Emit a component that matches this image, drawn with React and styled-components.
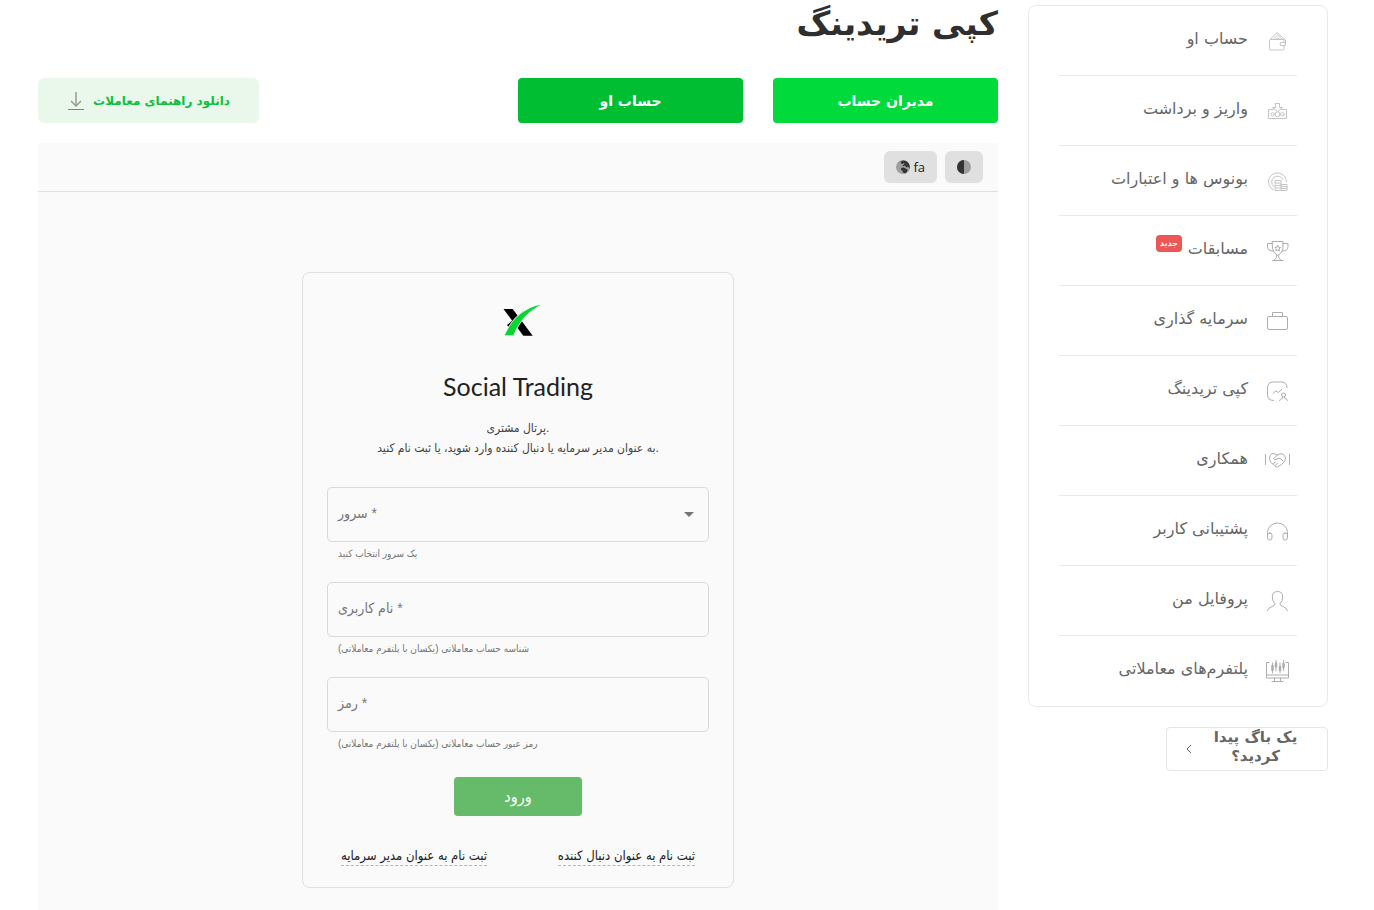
import React from "react";
import styled, { createGlobalStyle, css } from "styled-components";

const GlobalStyle = createGlobalStyle`
  *, *::before, *::after { box-sizing: border-box; }
  body { margin: 0; background: #fff; }
  button, input, select { font: inherit; }
  h1, h2, p, ul { margin: 0; padding: 0; }
`;

const Page = styled.div`
  display: flex;
  gap: 30px;
  min-height: 100vh;
  padding: 0 46px 0 38px;
  font-family: "DejaVu Sans", sans-serif;
  color: #333;
`;

const Sidebar = styled.aside`
  flex: 0 0 300px;
  padding-top: 5px;
`;

const Menu = styled.ul`
  list-style: none;
  padding: 0 30px;
  border: 1px solid #eaeaea;
  border-radius: 8px;
`;

const MenuItem = styled.li`
  border-bottom: 1px solid #eaeaea;
  &:last-child { border-bottom-color: transparent; }
`;

const MenuLink = styled.a`
  display: flex;
  align-items: center;
  gap: 10px;
  height: 69px;
  color: #666;
  font-size: 16px;
  text-decoration: none;
`;

const MenuIcon = styled.svg`
  flex: none;
  width: 39px;
  height: 27px;
  fill: none;
  stroke: ${(p) => (p.$faint ? "#c4c4c4" : "#adadad")};
  stroke-linecap: round;
  stroke-linejoin: round;
`;

const MenuLabel = styled.span`
  padding-bottom: 4px;
  line-height: 20px;
`;

const NewBadge = styled.span`
  align-self: flex-start;
  margin-top: 19px;
  margin-right: -4px;
  padding: 0 4px;
  border-radius: 4px;
  background: #ec5655;
  color: #fff;
  font-size: 8px;
  font-weight: 700;
  line-height: 17px;
`;

const BugButton = styled.button`
  display: flex;
  align-items: center;
  gap: 20px;
  width: 162px;
  height: 44px;
  margin-top: 20px;
  padding: 0 29px 0 18px;
  border: 1px solid #e5e5e5;
  border-radius: 4px;
  background: #fff;
  color: #666;
  font-size: 15px;
  font-weight: 700;
  line-height: 19px;
  span { flex: 1; padding-bottom: 4px; }
  svg { flex: none; }
`;

const Main = styled.main`
  flex: 1;
  min-width: 0;
  display: flex;
  flex-direction: column;
`;

const Title = styled.h1`
  color: #2f2f2f;
  font-size: 33px;
  font-weight: 700;
  line-height: 48px;
`;

const Actions = styled.div`
  display: flex;
  gap: 30px;
  margin: 30px 0 20px;
`;

const ActionButton = styled.button`
  width: 225px;
  height: 45px;
  border: 0;
  border-radius: 4px;
  background: ${(p) => (p.$dark ? "#00be32" : "#00da3a")};
  color: #fff;
  font-size: 14px;
  font-weight: 700;
`;

const GuideLink = styled.a`
  display: flex;
  align-items: center;
  justify-content: center;
  gap: 8px;
  width: 221px;
  height: 45px;
  margin-right: auto;
  border-radius: 6px;
  background: #e9f8eb;
  color: #0dbf3c;
  font-size: 12px;
  font-weight: 700;
  text-decoration: none;
`;

const Portal = styled.section`
  flex: 1;
  padding-bottom: 22px;
  background: #fafafa;
`;

const Toolbar = styled.div`
  display: flex;
  align-items: center;
  gap: 8px;
  height: 49px;
  padding: 0 15px;
  border-bottom: 1px solid #dfdfdf;
`;

const ToolButton = styled.button`
  display: flex;
  align-items: center;
  justify-content: center;
  gap: 3px;
  height: 32px;
  padding: 0 12px;
  border: 0;
  border-radius: 6px;
  background: #e0e0e0;
  color: #212121;
  font-family: "Open Sans", sans-serif;
  font-size: 13px;
`;

const Card = styled.form`
  display: flex;
  flex-direction: column;
  width: 432px;
  max-width: 100%;
  margin: 80px auto 0;
  padding: 24px 24px 21px;
  border: 1px solid #e0e0e4;
  border-radius: 8px;
  font-family: "Liberation Sans", "DejaVu Sans Condensed", "DejaVu Sans", sans-serif;
`;

const Logo = styled.svg`
  align-self: center;
  width: 48px;
  height: 48px;
`;

const CardTitle = styled.h2`
  margin: 25px 0 16px;
  color: #212121;
  font-family: Lato, sans-serif;
  font-size: 25px;
  font-weight: 400;
  line-height: 32px;
  text-align: center;
`;

const Intro = styled.p`
  margin-bottom: 29px;
  color: #424242;
  font-size: 12px;
  line-height: 20px;
  text-align: center;
`;

const Field = styled.div`
  display: grid;
  margin-bottom: ${(p) => (p.$last ? 25 : 20)}px;
`;

const FieldLabel = styled.label`
  grid-area: 1 / 1;
  align-self: center;
  justify-self: start;
  padding: 0 11px 3px;
  color: #757575;
  font-size: 14px;
  pointer-events: none;
`;

const control = css`
  grid-area: 1 / 1;
  width: 100%;
  height: 55px;
  padding: 0 12px;
  border: 1px solid #d9d9db;
  border-radius: 5px;
  background: transparent;
  color: #212121;
  font-size: 14px;
  appearance: none;
`;

const TextInput = styled.input`${control}`;
const SelectInput = styled.select`${control}`;

const Caret = styled.svg`
  grid-area: 1 / 1;
  align-self: center;
  justify-self: end;
  margin-right: 15px;
  pointer-events: none;
`;

const Helper = styled.p`
  margin-top: 4px;
  padding: 0 11px;
  color: #757575;
  font-size: 10px;
  line-height: 16px;
`;

const Submit = styled.button`
  align-self: center;
  width: 128px;
  height: 39px;
  border: 0;
  border-radius: 4px;
  background: #66bb6a;
  color: #fff;
  font-size: 16px;
`;

const Links = styled.div`
  display: flex;
  justify-content: space-between;
  margin-top: 30px;
  padding: 0 14px;
`;

const SignupLink = styled.a`
  border-bottom: 1px dashed #b5b5b5;
  color: #212121;
  font-size: 13px;
  line-height: 19px;
  text-decoration: none;
`;

const icons = {
  wallet: (
    <>
      <path d="M6.500 12.500h13.500v3h1.500v3H20v3.500q0 1-1 1H7q-1.500 0-1.500-1.500v-8q0-1 1-1zM20 15.500h-3.500q-.8 1.500 0 3H20" />
      <path d="M6.500 12 13 5.500 21.500 13v2.500M9.500 12 13.500 8l5 4.500M12 12q1.500-2 3.500 0" />
    </>
  ),
  cash: (
    <>
      <path d="M9.500 12.500h-5v9h18v-9h-5" />
      <path d="M11.500 6.500h4v4h3L13.500 14.500l-5-4h3z" />
      <circle cx="13.500" cy="17.300" r="2.500" />
      <circle cx="8.500" cy="17.300" r="1.700" />
      <circle cx="18.500" cy="17.300" r="1.700" />
    </>
  ),
  bonus: (
    <>
      <path d="M9.500 23A9 9 0 1 1 22.500 15M9.500 19.500A6 6 0 1 1 19 12.500" />
      <path d="M11.500 13.500h5.500v10h-5.500zM11.500 16h5.500M11.500 18.500h5.500M11.500 21h5.500M17 17.500h6v6h-6M17 19.500h6M17 21.500h6" />
    </>
  ),
  trophy: (
    <>
      <path d="M8.500 4.500h10.500v7q0 4-5.250 7-5.250-3-5.250-7zM8.500 6.500h-5v3q0 4.500 5.500 4.500M19 6.500h5v3q0 4.500-5.500 4.500M12.500 18.500v2l-2.500 3M14.700 18.500v2l2.500 3M8.500 23.500h10.500" />
      <path d="m13.700 8.500.9 1.700 1.900.3-1.400 1.400.4 2-1.800-.9-1.800.9.4-2-1.400-1.400 1.900-.3z" />
    </>
  ),
  briefcase: (
    <>
      <rect x="3.500" y="9.500" width="20" height="13" rx="1.500" />
      <path d="M8.500 9.500v-4h10v4" />
    </>
  ),
  copy: (
    <>
      <path d="M9.500 23.500q-6 0-6-6v-6.500q0-6 6-6h8q5.500 0 5.500 5.500" />
      <path d="m9 16.500 2.500-2.500 3 1.500 3.500-3.500" />
      <circle cx="19.500" cy="18" r="2" />
      <path d="M15.500 23.500q.3-1.500 3-2.200v-1.500M23.700 23.500q-.3-1.500-3-2.200v-1.500" />
    </>
  ),
  handshake: (
    <>
      <path d="M1.500 7.500v10M25.500 7.500v10" />
      <path d="M13.500 8 10.500 6.700H8q-2.500 1.300-2.500 4.300 0 2.500 1.500 4.500l4.500 4 1.500.7 4.500-2.700 3-3q1.500-2 .5-5-1-2.800-4-2.800-2 0-3.500 1.300l-4 3.500q1 1.500 2.500 1l2-1.200h2l3 2.700M9.500 16.500l2-1.500M11.500 18l2-1.500" />
    </>
  ),
  headphones: (
    <>
      <path d="M3.500 19v-3.500a10 9.500 0 0 1 20 0V19" />
      <rect x="3.500" y="16" width="4.500" height="7" rx="2.200" />
      <rect x="19" y="16" width="4.500" height="7" rx="2.200" />
    </>
  ),
  user: (
    <path d="M3.500 23.500q1-3 4.500-4 3-.8 3-2.700-2.700-2.500-2.700-6.800 0-5.500 5.200-5.500t5.200 5.500q0 4.300-2.700 6.800 0 1.900 3 2.700 3.500 1 4.500 4" />
  ),
  platform: (
    <>
      <path d="M5 5.500H2.500v15.500h22V5.500H22M2.500 18h22M10.500 21v3M16.500 21v3M8 24.500h11" />
      <path d="M8.500 6v10M12 3.500v10.500M16 6v9.500M19.500 3.500v10" />
      <path strokeWidth="2.500" d="M8.500 9v4M12 6.500v3M16 10v3M19.500 7v3" />
    </>
  ),
};

const menu = [
  { icon: "wallet", label: "حساب او", faint: true },
  { icon: "cash", label: "واریز و برداشت", faint: true },
  { icon: "bonus", label: "بونوس ها و اعتبارات", faint: true },
  { icon: "trophy", label: "مسابقات", badge: "جدید" },
  { icon: "briefcase", label: "سرمایه گذاری" },
  { icon: "copy", label: "کپی تریدینگ" },
  { icon: "handshake", label: "همکاری" },
  { icon: "headphones", label: "پشتیبانی کاربر" },
  { icon: "user", label: "پروفایل من" },
  { icon: "platform", label: "پلتفرم‌های معاملاتی" },
];

export default function App() {
  return (
    <>
      <GlobalStyle />
      <Page dir="rtl" lang="fa">
        <Sidebar>
          <Menu>
            {menu.map((item) => (
              <MenuItem key={item.icon}>
                <MenuLink href="#">
                  <MenuIcon viewBox="0 0 27 27" $faint={item.faint} aria-hidden="true">{icons[item.icon]}</MenuIcon>
                  <MenuLabel>{item.label}</MenuLabel>
                  {item.badge && <NewBadge>{item.badge}</NewBadge>}
                </MenuLink>
              </MenuItem>
            ))}
          </Menu>
          <BugButton type="button">
            <span>یک باگ پیدا کردید؟</span>
            <svg width="8" height="10" viewBox="0 0 8 10" fill="none" stroke="#666" aria-hidden="true">
              <path d="M6 1 2 5l4 4" />
            </svg>
          </BugButton>
        </Sidebar>

        <Main>
          <Title>کپی تریدینگ</Title>
          <Actions>
            <ActionButton type="button">مدیران حساب</ActionButton>
            <ActionButton type="button" $dark>حساب او</ActionButton>
            <GuideLink href="#">
              دانلود راهنمای معاملات
              <svg width="18" height="20" viewBox="0 0 18 20" fill="none" aria-hidden="true">
                <path d="M9 1v14M4 10l5 5 5-5" stroke="#999" strokeWidth="1.500" />
                <path d="M1 18.500h16" stroke="#808080" />
              </svg>
            </GuideLink>
          </Actions>

          <Portal>
            <Toolbar>
              <ToolButton type="button" aria-label="حالت نمایش">
                <svg width="14" height="14" viewBox="0 0 14 14" aria-hidden="true">
                  <circle cx="7" cy="7" r="7" fill="#9e9e9e" />
                  <path d="M7 0a7 7 0 0 0 0 14z" fill="#333" />
                </svg>
              </ToolButton>
              <ToolButton type="button">
                fa
                <svg width="14" height="14" viewBox="0 0 14 14" aria-hidden="true">
                  <circle cx="7" cy="7" r="7" fill="#9e9e9e" />
                  <path d="M5 1.500 7 .5l3 .5 2.500 2 1.300 3-.3 3-1.500-2.500-1.500 1L9 5.500l-1.500.8-1-.8L8 4.500 8.500 3 7 3.500 6 4 4.500 3z" fill="#333" />
                  <path d="M5 8l2.500-.5 3 1.500 1.200 1-1 2.300-1.700 1.300L7 12.500l-.5-1.500L5 9.500z" fill="#333" />
                </svg>
              </ToolButton>
            </Toolbar>

            <Card dir="ltr" onSubmit={(e) => e.preventDefault()}>
              <Logo viewBox="0 0 48 48" aria-hidden="true">
                <path d="M9.500 12h9.200l20 26.700h-9.400z" fill="#000" />
                <path d="M28.500 14.500 32 15l-4 7-5 6-3 9-7-9z" fill="#000" />
                <path d="M10.700 38.300C16 26 26 12 46.700 7.700 35 14 26 22 19.300 38.300z" fill="#08d630" stroke="#fafafa" strokeWidth="1.500" paintOrder="stroke" />
              </Logo>
              <CardTitle>Social Trading</CardTitle>
              <Intro>
                پرتال مشتری.
                <br />
                به عنوان مدیر سرمایه یا دنبال کننده وارد شوید، یا ثبت نام کنید.
              </Intro>

              <Field>
                <SelectInput id="server" defaultValue="" aria-describedby="server-help">
                  <option value="" />
                </SelectInput>
                <FieldLabel htmlFor="server">سرور *</FieldLabel>
                <Caret width="10" height="5" viewBox="0 0 10 5" aria-hidden="true">
                  <path d="M0 0h10L5 5z" fill="#757575" />
                </Caret>
                <Helper id="server-help">یک سرور انتخاب کنید</Helper>
              </Field>
              <Field>
                <TextInput id="login" type="text" aria-describedby="login-help" />
                <FieldLabel htmlFor="login">نام کاربری *</FieldLabel>
                <Helper id="login-help">شناسه حساب معاملاتی (یکسان با پلتفرم معاملاتی)</Helper>
              </Field>
              <Field $last>
                <TextInput id="password" type="password" aria-describedby="password-help" />
                <FieldLabel htmlFor="password">رمز *</FieldLabel>
                <Helper id="password-help">رمز عبور حساب معاملاتی (یکسان با پلتفرم معاملاتی)</Helper>
              </Field>

              <Submit type="submit">ورود</Submit>
              <Links>
                <SignupLink href="#">ثبت نام به عنوان مدیر سرمایه</SignupLink>
                <SignupLink href="#">ثبت نام به عنوان دنبال کننده</SignupLink>
              </Links>
            </Card>
          </Portal>
        </Main>
      </Page>
    </>
  );
}
